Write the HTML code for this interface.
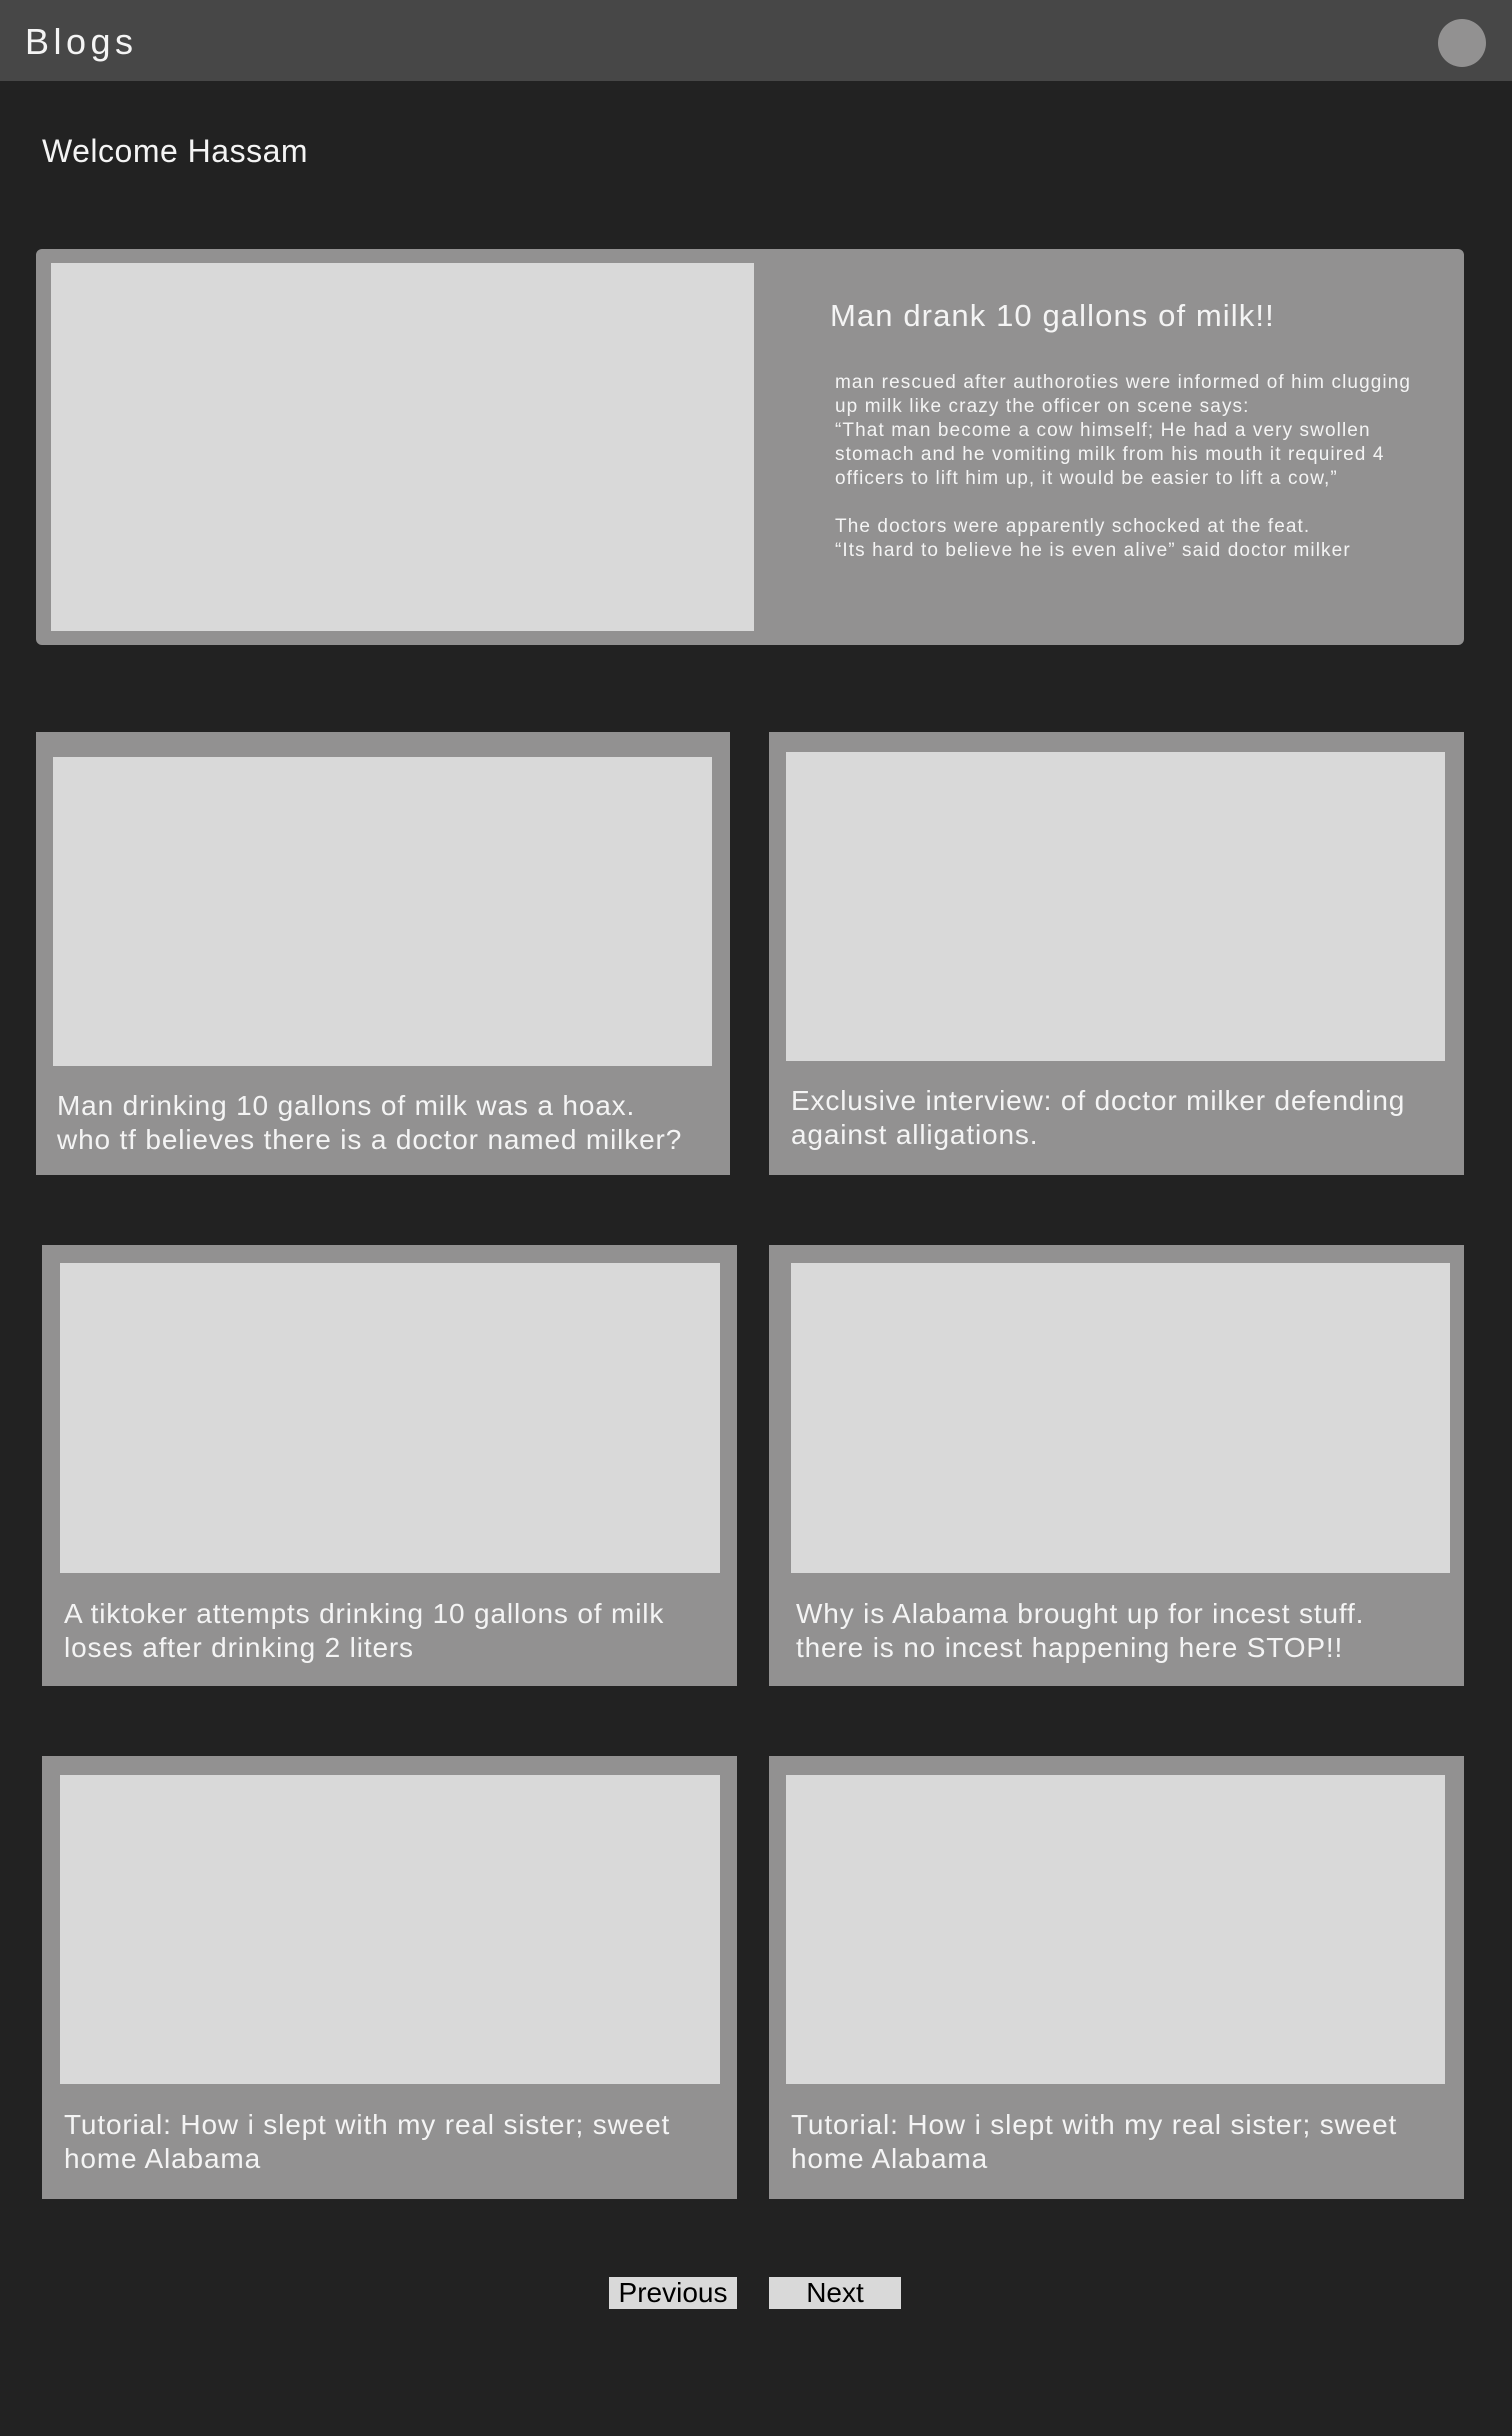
<!DOCTYPE html>
<html><head><meta charset="utf-8"><style>
*{margin:0;padding:0;box-sizing:border-box}
body{width:1512px;height:2436px;background:#222;font-family:"Liberation Sans",sans-serif;color:#f4f4f4;position:relative;overflow:hidden}
.a{position:absolute}
.card{position:absolute;background:#929191}
.img{position:absolute;background:#d9d9d9}
.t{position:absolute;font-size:28px;line-height:34px;white-space:nowrap;letter-spacing:0.85px}
.btn{position:absolute;background:#d9d9d9;color:#000;font-size:28px;line-height:32px;text-align:center}
</style></head><body>
<div class="a" style="left:0;top:0;width:1512px;height:81px;background:#474747"></div>
<div class="a" style="left:25px;top:20px;font-size:36px;letter-spacing:4.5px;line-height:44px">Blogs</div>
<div class="a" style="left:1438px;top:19px;width:48px;height:48px;border-radius:50%;background:#929191"></div>
<div class="a" style="left:42px;top:132px;font-size:32px;line-height:38px;letter-spacing:0.5px">Welcome Hassam</div>

<div class="card" style="left:36px;top:249px;width:1428px;height:396px;border-radius:6px"></div>
<div class="img" style="left:51px;top:263px;width:703px;height:368px"></div>
<div class="a" style="left:830px;top:297px;font-size:31px;line-height:38px;letter-spacing:1.1px">Man drank 10 gallons of milk!!</div>
<div class="a" style="left:835px;top:371px;font-size:19px;line-height:24px;white-space:nowrap;letter-spacing:1.1px">man rescued after authoroties were informed of him clugging<br>up milk like crazy the officer on scene says:<br>“That man become a cow himself; He had a very swollen<br>stomach and he vomiting milk from his mouth it required 4<br>officers to lift him up, it would be easier to lift a cow,”<br><br>The doctors were apparently schocked at the feat.<br>“Its hard to believe he is even alive” said doctor milker</div>

<div class="card" style="left:36px;top:732px;width:694px;height:443px"></div>
<div class="img" style="left:53px;top:757px;width:659px;height:309px"></div>
<div class="t" style="left:57px;top:1089px">Man drinking 10 gallons of milk was a hoax.<br>who tf believes there is a doctor named milker?</div>

<div class="card" style="left:769px;top:732px;width:695px;height:443px"></div>
<div class="img" style="left:786px;top:752px;width:659px;height:309px"></div>
<div class="t" style="left:791px;top:1084px">Exclusive interview: of doctor milker defending<br>against alligations.</div>

<div class="card" style="left:42px;top:1245px;width:695px;height:441px"></div>
<div class="img" style="left:60px;top:1263px;width:660px;height:310px"></div>
<div class="t" style="left:64px;top:1597px">A tiktoker attempts drinking 10 gallons of milk<br>loses after drinking 2 liters</div>

<div class="card" style="left:769px;top:1245px;width:695px;height:441px"></div>
<div class="img" style="left:791px;top:1263px;width:659px;height:310px"></div>
<div class="t" style="left:796px;top:1597px">Why is Alabama brought up for incest stuff.<br>there is no incest happening here STOP!!</div>

<div class="card" style="left:42px;top:1756px;width:695px;height:443px"></div>
<div class="img" style="left:60px;top:1775px;width:660px;height:309px"></div>
<div class="t" style="left:64px;top:2108px">Tutorial: How i slept with my real sister; sweet<br>home Alabama</div>

<div class="card" style="left:769px;top:1756px;width:695px;height:443px"></div>
<div class="img" style="left:786px;top:1775px;width:659px;height:309px"></div>
<div class="t" style="left:791px;top:2108px">Tutorial: How i slept with my real sister; sweet<br>home Alabama</div>

<div class="btn" style="left:609px;top:2277px;width:128px;height:32px">Previous</div>
<div class="btn" style="left:769px;top:2277px;width:132px;height:32px">Next</div>
</body></html>
